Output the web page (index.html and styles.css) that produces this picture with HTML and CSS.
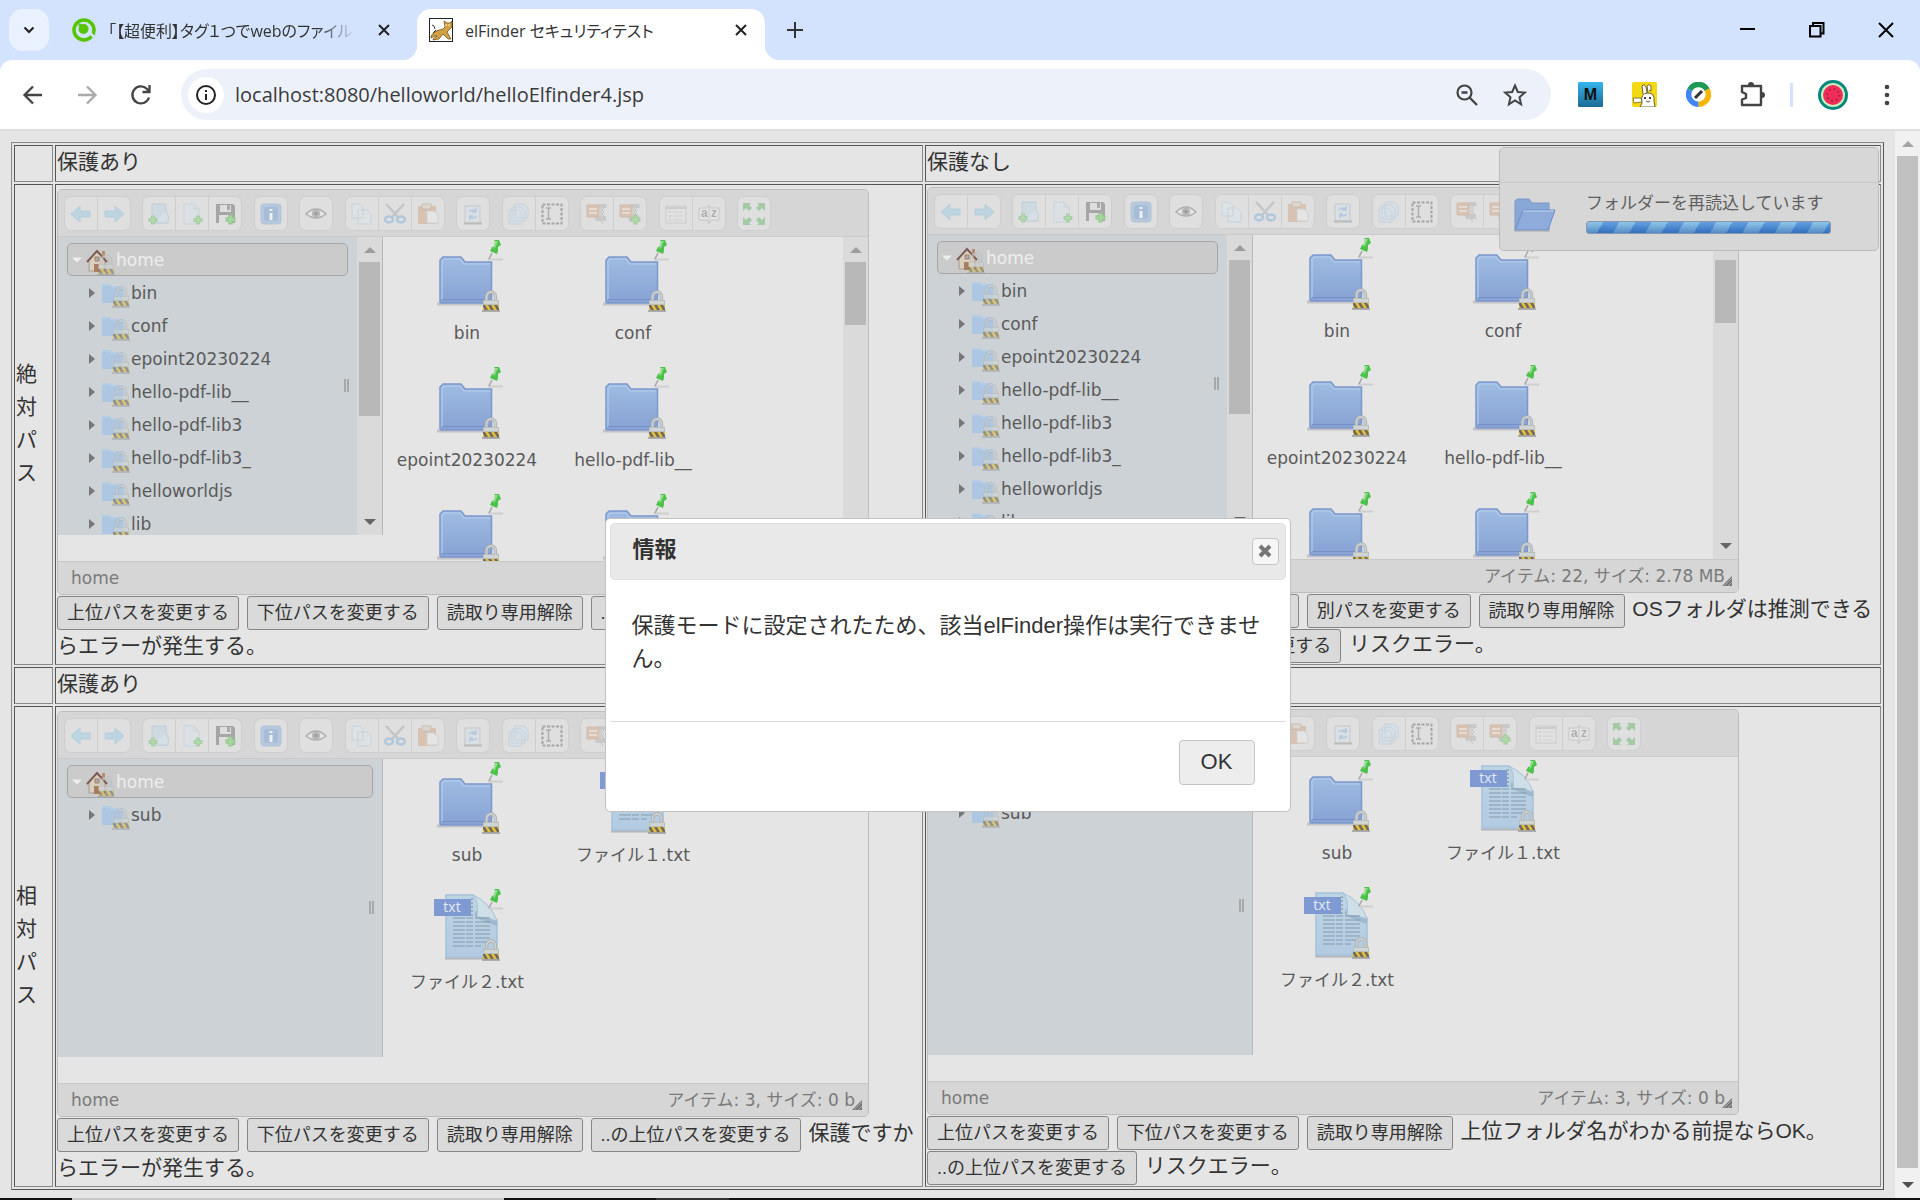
FILE: index.html
```html
<!DOCTYPE html>
<html lang="ja">
<head>
<meta charset="utf-8">
<title>elFinder セキュリティテスト</title>
<link rel="stylesheet" href="styles.css">
</head>
<body>
<svg class="defs" aria-hidden="true">
  <defs>
    <linearGradient id="g-folder" x1="0" y1="0" x2="0" y2="1"><stop offset="0" stop-color="#9fbce2"/><stop offset="1" stop-color="#87a2d4"/></linearGradient>
    <linearGradient id="g-doc" x1="0" y1="0" x2="0" y2="1"><stop offset="0" stop-color="#bdd5e2"/><stop offset="1" stop-color="#b3cbe2"/></linearGradient>
    <linearGradient id="g-m" x1="0" y1="0" x2="0" y2="1"><stop offset="0" stop-color="#35b6ee"/><stop offset="1" stop-color="#1c6a93"/></linearGradient>
    <pattern id="p-hazard" width="6" height="5" patternUnits="userSpaceOnUse"><rect width="6" height="5" fill="#e3bf3c"/><path d="M0 0h3l3 5H3z" fill="#6f6a5c"/></pattern>
  </defs>
  <symbol id="lock" viewBox="0 0 18 22"><path d="M4.500 11V7a4.500 5 0 0 1 9 0v4" fill="none" stroke="#a9acac" stroke-width="3.400"/><path d="M4.500 11V7a4.500 5 0 0 1 9 0v4" fill="none" stroke="#cdd1d1" stroke-width="1.800"/><rect x="1" y="10" width="16" height="11" fill="#b9bdbc"/><rect x="2" y="11" width="14" height="3" fill="#d0d4d3"/><rect x="1" y="15" width="16" height="5" fill="url(#p-hazard)"/><path d="M0 21h18" stroke="#9a9a9a" stroke-width="1.500"/></symbol>
  <symbol id="pin" viewBox="0 0 16 22"><path d="M0 20.500h15" stroke="#cfcfcf" stroke-width="2"/><path d="M4 14l-3 6" stroke="#a5a5a5" stroke-width="1.500"/><path d="M6 1l5-0 2 5-3 2 0 4 -1 3-7-3 2-4 3-1 1-3z" fill="#4dc24a"/><path d="M7 2l3 0-3 7-2 1z" fill="#8fdc8b"/></symbol>
  <symbol id="folder" viewBox="0 0 84 80"><path d="M12 66h54" stroke="#c4c4c8" stroke-width="3"/><path d="M15 64V22l3-3h18l4 5h26.500v40q0 1-1 1H16q-1 0-1-1z" fill="url(#g-folder)" stroke="#7d98cb" stroke-width="1.500"/><path d="M17 62V23l2-2h16l4 5h26" fill="none" stroke="#b4cdeb" stroke-width="1.200"/><path d="M17 61.500h48" stroke="#7590c6"/><use href="#pin" x="63" y="1" width="16" height="22"/><use href="#lock" x="57" y="52" width="18" height="22"/></symbol>
  <symbol id="txt" viewBox="0 0 84 80"><path d="M20 71.500h50" stroke="#b4b4b8" stroke-width="2"/><path d="M21 70V8h27L72 33v37z" fill="url(#g-doc)" stroke="#a5c2da" stroke-width="1.500"/><path d="M50 24l22 10v5q-10-3-22-9z" fill="#8ca9c5" opacity=".6"/><path d="M48 8q6 6 4 22 10 0 20 4Q66 16 48 8z" fill="#cfdfe8" stroke="#a5c2da"/><path d="M28 31h38M28 35h38M28 39h38M28 43h38M28 47h38M28 51h38M28 55h38M28 59h28" stroke="#8399ad" stroke-width="1.200" stroke-dasharray="12 1 7 2 15 1"/><path d="M47 11v17h4" stroke="#9aabba" stroke-width="2" fill="none" stroke-dasharray="2 2"/><rect x="9" y="12" width="37" height="17" fill="#7f9ad2"/><text x="27" y="25" font-family="Open Sans, sans-serif" font-size="14" fill="#e4e9f2" text-anchor="middle">txt</text><use href="#pin" x="63" y="1" width="16" height="22"/><use href="#lock" x="57" y="52" width="18" height="22"/></symbol>
  <symbol id="t-folder" viewBox="0 0 30 28"><path d="M1 20V2h8l2 2h11v17H1z" fill="#adc7e2"/><path d="M1 3h8l2 2h11" stroke="#bed2e8" fill="none"/><use href="#lock" x="11" y="4" width="18" height="22" opacity=".6"/></symbol>
  <symbol id="t-home" viewBox="0 0 30 28"><path d="M3 11v11h16V11l-8-8z" fill="#dacfc0" stroke="#a99a8c"/><path d="M1 13L11 2l10 11" fill="none" stroke="#7c5c56" stroke-width="2"/><path d="M16 2h3v6h-3z" fill="#b98e70"/><path d="M8 15h5v8H8z" fill="#a87e5c"/><path d="M9 8h4v4H9z" fill="#9fb0c0" stroke="#a87e5c"/><use href="#lock" x="11" y="5" width="18" height="22" opacity=".55"/></symbol>
  <symbol id="back" viewBox="0 0 22 22"><path d="M1 11l9-8v5h10v6H10v5z" fill="#8cc8e4" stroke="#7ab4d4"/></symbol>
  <symbol id="fwd" viewBox="0 0 22 22"><path d="M21 11l-9-8v5H2v6h10v5z" fill="#8cc8e4" stroke="#7ab4d4"/></symbol>
  <symbol id="plus" viewBox="0 0 10 10"><path d="M3.500 1h3v2.500H9v3H6.500V9h-3V6.500H1v-3h2.500z" fill="#6fd060" stroke="#55ae48"/></symbol>
  <symbol id="mkdir" viewBox="0 0 22 22"><path d="M4 20V1h14v19z" fill="#b5d3e2" stroke="#8fb4cc"/><path d="M18 8q4 5 2 12H4" fill="#c9dfe9" stroke="#8fb4cc"/><use href="#plus" x="0" y="12" width="10" height="10"/></symbol>
  <symbol id="mkfile" viewBox="0 0 22 22"><path d="M3 21V1h10l5 5v15z" fill="#d5e3ec" stroke="#a9c3d6"/><path d="M13 1v5h5" fill="none" stroke="#a9c3d6"/><use href="#plus" x="12" y="12" width="10" height="10"/></symbol>
  <symbol id="save" viewBox="0 0 22 22"><path d="M2 1h17l2 2v17H2z" fill="#6e6e6e"/><path d="M6 2h11v7H6zM5 12h13v8H5z" fill="#dedede"/><path d="M13 2h3v5h-3z" fill="#777"/><use href="#plus" x="11" y="11" width="11" height="11"/></symbol>
  <symbol id="info" viewBox="0 0 22 22"><rect x="1" y="1" width="20" height="20" rx="3" fill="#8fb2dc" stroke="#8aa8cf"/><rect x="4" y="4" width="14" height="14" rx="2" fill="#6f9bd0"/><path d="M11 6v2M11 10v7" stroke="#fff" stroke-width="3"/></symbol>
  <symbol id="eye" viewBox="0 0 22 22"><path d="M1 11Q11 1 21 11 11 19 1 11z" fill="#eee" stroke="#666" stroke-width="1.500"/><circle cx="11" cy="10.500" r="4" fill="#777"/><circle cx="11" cy="10.500" r="1.500" fill="#333"/></symbol>
  <symbol id="copy" viewBox="0 0 22 22"><path d="M1 15V1h7l4 4v10zM7 21V7h9l4 4v10z" fill="#dbe7ef" stroke="#a6c2d8"/></symbol>
  <symbol id="cut" viewBox="0 0 22 22"><path d="M2 1l12 13M20 1L8 14" stroke="#9a9fa3" stroke-width="2.500"/><ellipse cx="5" cy="16.500" rx="4" ry="3" fill="none" stroke="#68a6d6" stroke-width="2.500"/><ellipse cx="17" cy="16.500" rx="4" ry="3" fill="none" stroke="#68a6d6" stroke-width="2.500"/></symbol>
  <symbol id="paste" viewBox="0 0 22 22"><path d="M1 3h18v18H1z" fill="#cf9a72"/><path d="M5 1h9v5H5z" fill="#d8cdbd" stroke="#a98765"/><path d="M10 8h7l4 4v8H10z" fill="#eee" stroke="#b8b8b8"/></symbol>
  <symbol id="empty" viewBox="0 0 22 22"><path d="M3 20V3h15v17z" fill="#d3e0ec" stroke="#9fa7ae"/><path d="M2 20.500h18" stroke="#888" stroke-width="2"/><path d="M7 9q4-4 7 0M15 13q-4 4-7 0M14 5v4h-4M8 17v-4h3" fill="none" stroke="#7aa4dc" stroke-width="1.500"/></symbol>
  <symbol id="dup" viewBox="0 0 22 22"><path d="M7 15V1h9l4 4v10zM4 18V4h9l4 4v10zM1 21V7h9l4 4v10z" fill="#cfe0ec" stroke="#9fc0d9"/></symbol>
  <symbol id="rename" viewBox="0 0 22 22"><rect x="1.500" y="1.500" width="19" height="19" fill="none" stroke="#505050" stroke-width="2" stroke-dasharray="3 1.500"/><path d="M5 5h5M5 16h5M7.500 5v11" stroke="#666" stroke-width="1.500"/></symbol>
  <symbol id="zip" viewBox="0 0 22 22"><path d="M12 1h8l1 4H12zM8 13h12v5H10z" fill="#aaa"/><path d="M15 5v8M18 5l-2 2 2 2-2 2 2 2M15 18l2 3" stroke="#999" fill="none"/><path d="M1 2h12v12H1z" fill="#cf9a72" stroke="#b88a66"/><path d="M3 5h8v2H3zM3 9h8v2H3z" fill="#ead6c4"/></symbol>
  <symbol id="zipadd" viewBox="0 0 22 22"><use href="#zip" width="22" height="22"/><use href="#plus" x="11" y="11" width="11" height="11"/></symbol>
  <symbol id="view" viewBox="0 0 22 22"><rect x="1" y="3" width="20" height="17" fill="#e4e4e4" stroke="#b0b0b0"/><path d="M1 5h20" stroke="#b0b0b0" stroke-width="2"/><path d="M4 9h2M4 13h2M4 17h2" stroke="#dcb88a" stroke-width="2"/><path d="M8 9h10M8 13h10M8 17h10" stroke="#c0c0c0"/></symbol>
  <symbol id="sort" viewBox="0 0 22 22"><path d="M1 5h8l2-3 2 3h8v12h-8l-2 4-2-4H1z" fill="#eaeaea" stroke="#a6a6a6"/><path d="M11 3v17" stroke="#a6a6a6"/><text x="3" y="14" font-family="Liberation Sans, sans-serif" font-weight="bold" font-size="12" fill="#666">a</text><text x="13" y="14" font-family="Liberation Sans, sans-serif" font-weight="bold" font-size="12" fill="#666">z</text></symbol>
  <symbol id="full" viewBox="0 0 22 22"><path d="M0 0h8L6 2l3 3-3 3-3-3-3 3zM22 0v8l-3-3-3 3-3-3 3-3-2-2zM0 22v-8l3 3 3-3 3 3-3 3 2 2zM22 22h-8l2-2-3-3 3-3 3 3 3-3z" fill="#7dbb80"/></symbol>
  <symbol id="up" viewBox="0 0 12 6"><path d="M6 0l6 6H0z"/></symbol>
  <symbol id="down" viewBox="0 0 12 6"><path d="M0 0h12L6 6z"/></symbol>
  <symbol id="x" viewBox="0 0 16 16"><path d="M3 3l10 10M13 3L3 13" stroke="#222" stroke-width="2" fill="none"/></symbol>
</svg>

<header class="browser">
  <div class="tabs">
    <button class="tab-search" type="button" aria-label="タブを検索"><svg width="16" height="16" viewBox="0 0 16 16"><path d="M3.500 5.500L8 10l4.500-4.500" fill="none" stroke="#1f1f1f" stroke-width="2"/></svg></button>
    <div class="tab">
      <svg width="24" height="24" viewBox="0 0 24 24"><circle cx="12" cy="12" r="10" fill="none" stroke="#55c500" stroke-width="3.500"/><circle cx="11.500" cy="11" r="5" fill="#55c500"/><circle cx="8" cy="7" r="1.500" fill="#55c500"/><path d="M18 15l5 5" stroke="#d3e3fd" stroke-width="2.500"/></svg>
      <span class="tab-title faded">「【超便利】タグ１つでwebのファイル</span>
      <button class="plain" type="button" aria-label="閉じる"><svg width="16" height="16"><use href="#x"/></svg></button>
    </div>
    <div class="tab active">
      <svg width="24" height="24" viewBox="0 0 24 24"><rect x=".5" y=".5" width="23" height="23" fill="#fff" stroke="#222"/><path d="M2 18q3-5 8-6l4-1 2-2-1-6 3 2 3 0 2-2v6l-3 3-2 2 4 7h-3l-5-5-4 5-6 1v-1l4-3-2 0-4 2z" fill="#d2a041" stroke="#60471b" stroke-width=".7"/><path d="M3 7l2 1 1 3M4 15l3-3" fill="none" stroke="#333"/><path d="M16 7h2M19 7h2" stroke="#fff5b8"/></svg>
      <span class="tab-title">elFinder セキュリティテスト</span>
      <button class="plain" type="button" aria-label="閉じる"><svg width="16" height="16"><use href="#x"/></svg></button>
    </div>
    <button class="plain new-tab" type="button" aria-label="新しいタブ"><svg width="16" height="16" viewBox="0 0 16 16"><path d="M8 0v16M0 8h16" stroke="#333" stroke-width="2"/></svg></button>
    <div class="win">
      <button class="plain" type="button" aria-label="最小化"><svg width="16" height="16" viewBox="0 0 16 16"><path d="M0 7h15" stroke="#000" stroke-width="2"/></svg></button>
      <button class="plain" type="button" aria-label="元に戻す"><svg width="16" height="16" viewBox="0 0 16 16"><path d="M1 4h10.500v10.500H1zM4 4V1h10.500v10.500H12" fill="none" stroke="#000" stroke-width="2"/></svg></button>
      <button class="plain" type="button" aria-label="ウィンドウを閉じる"><svg width="16" height="16" viewBox="0 0 16 16"><path d="M1 1l14 14M15 1L1 15" stroke="#000" stroke-width="2"/></svg></button>
    </div>
  </div>
  <div class="nav-bar">
    <div class="nav-btns">
      <button class="plain" type="button" aria-label="戻る"><svg width="24" height="24" viewBox="0 0 24 24"><path d="M21 12H4M12 3.500L3.500 12l8.500 8.500" fill="none" stroke="#444" stroke-width="2.300"/></svg></button>
      <button class="plain" type="button" aria-label="進む"><svg width="24" height="24" viewBox="0 0 24 24"><path d="M3 12h17M12 3.500L20.500 12 12 20.500" fill="none" stroke="#aaa" stroke-width="2.300"/></svg></button>
      <button class="plain" type="button" aria-label="再読み込み"><svg width="24" height="24" viewBox="0 0 24 24"><path d="M20 14.500a8.500 8.500 0 1 1-2-8.500l2.500 2.500M20.500 2v7h-7" fill="none" stroke="#444" stroke-width="2.300"/></svg></button>
    </div>
    <div class="omnibox">
      <span class="site-info"><svg width="22" height="22" viewBox="0 0 22 22"><circle cx="11" cy="11" r="9" fill="none" stroke="#222" stroke-width="2"/><path d="M11 6v2M11 10v6" stroke="#222" stroke-width="2"/></svg></span>
      <input class="url" type="text" aria-label="アドレス" value="localhost:8080/helloworld/helloElfinder4.jsp">
      <svg width="24" height="24" viewBox="0 0 24 24"><circle cx="9.500" cy="9.500" r="7" fill="none" stroke="#444" stroke-width="2.200"/><path d="M6.500 9.500h6M14.500 14.500L22 22" stroke="#444" stroke-width="2.400"/></svg>
      <svg width="24" height="24" viewBox="0 0 24 24"><path d="M12 2.500l2.800 6.500 7 .6-5.300 4.700 1.600 7L12 17.500l-6.100 3.800 1.600-7L2.200 9.600l7-.6z" fill="none" stroke="#444" stroke-width="2"/></svg>
    </div>
    <div class="ext">
      <svg width="25" height="25" viewBox="0 0 25 25"><rect width="25" height="25" rx="1" fill="url(#g-m)"/><text x="12.500" y="18" font-family="Liberation Sans, sans-serif" font-weight="bold" font-size="16" text-anchor="middle" fill="#111">M</text></svg>
      <svg width="25" height="25" viewBox="0 0 25 25"><rect width="25" height="25" rx="2" fill="#f3d912"/><path d="M11 12l-1-8q2-3 4 1l1 6M16 11l-1-7q2-3 4 0v5l-2-1" fill="#fff" stroke="#6d6330"/><path d="M1 16h8l1 4-8 1z" fill="#fff" stroke="#8a7b30"/><path d="M8 25l2-4q-2-10 6-10 7 0 6 8l1 6z" fill="#fff" stroke="#6d6330"/><circle cx="13" cy="16" r="1"/><circle cx="18" cy="16" r="1"/><path d="M14 19q2 2 4 0" fill="none" stroke="#555"/></svg>
      <svg width="25" height="25" viewBox="0 0 25 25"><g fill="none" stroke-width="5.500"><path d="M3.900 7.700A9.700 9.700 0 0 1 21.100 7.700" stroke="#1a9a54"/><path d="M21.100 7.700A9.700 9.700 0 0 1 12.500 22.200" stroke="#f7b500"/><path d="M12.500 22.200A9.700 9.700 0 0 1 3.900 7.700" stroke="#4285f4"/></g><path d="M9 16l7-7" stroke="#333" stroke-width="3"/></svg>
      <svg width="25" height="25" viewBox="0 0 25 25"><path d="M2 4h19v19H2v-5.500l4-1.500v-4L2 10z" fill="none" stroke="#444" stroke-width="2.400" stroke-linejoin="round"/><path d="M8 3a3 3 0 0 1 6 0zM22 10a3 3 0 0 1 0 6z" fill="#444"/></svg>
    </div>
    <div class="profile">
      <svg width="30" height="30" viewBox="0 0 30 30"><circle cx="15" cy="15" r="15" fill="#06877c"/><circle cx="15" cy="15" r="12" fill="#c8efc0"/><circle cx="15" cy="15" r="10" fill="#f02d58"/><circle cx="15" cy="15" r="6" fill="none" stroke="#8c1b3a" stroke-width="1.500" stroke-dasharray="1.500 3.200"/></svg>
      <svg width="12" height="24" viewBox="0 0 12 24"><circle cx="6" cy="4" r="2.300" fill="#444"/><circle cx="6" cy="12" r="2.300" fill="#444"/><circle cx="6" cy="20" r="2.300" fill="#444"/></svg>
    </div>
  </div>
</header>

<div class="viewport">
<main class="page">
<table class="grid">
  <colgroup><col class="c-label"><col class="c-left"><col></colgroup>
  <tr class="head"><td></td><td>保護あり</td><td>保護なし</td></tr>
  <tr>
    <td class="label">絶対パス</td>
    <td>
      <section class="fm">
        <div class="tools">
          <div><button type="button" aria-label="戻る"><svg><use href="#back"/></svg></button><button type="button" aria-label="進む"><svg><use href="#fwd"/></svg></button></div>
          <div><button type="button" aria-label="新規フォルダー"><svg><use href="#mkdir"/></svg></button><button type="button" aria-label="新規ファイル"><svg><use href="#mkfile"/></svg></button><button type="button" aria-label="保存" class="strong"><svg><use href="#save"/></svg></button></div>
          <div><button type="button" aria-label="情報" class="strong"><svg><use href="#info"/></svg></button></div>
          <div><button type="button" aria-label="プレビュー"><svg><use href="#eye"/></svg></button></div>
          <div><button type="button" aria-label="コピー"><svg><use href="#copy"/></svg></button><button type="button" aria-label="切り取り"><svg><use href="#cut"/></svg></button><button type="button" aria-label="貼り付け"><svg><use href="#paste"/></svg></button></div>
          <div><button type="button" aria-label="空にする"><svg><use href="#empty"/></svg></button></div>
          <div><button type="button" aria-label="複製"><svg><use href="#dup"/></svg></button><button type="button" aria-label="名前変更"><svg><use href="#rename"/></svg></button></div>
          <div><button type="button" aria-label="解凍"><svg><use href="#zip"/></svg></button><button type="button" aria-label="圧縮"><svg><use href="#zipadd"/></svg></button></div>
          <div><button type="button" aria-label="表示"><svg><use href="#view"/></svg></button><button type="button" aria-label="並べ替え"><svg><use href="#sort"/></svg></button></div>
          <div><button type="button" aria-label="全画面"><svg class="mid"><use href="#full"/></svg></button></div>
        </div>
        <div class="body">
          <nav class="side">
            <ul class="tree">
              <li class="root"><svg class="fold"><use href="#down"/></svg><svg class="ico"><use href="#t-home"/></svg>home</li>
              <li><i></i><svg class="ico"><use href="#t-folder"/></svg>bin</li>
              <li><i></i><svg class="ico"><use href="#t-folder"/></svg>conf</li>
              <li><i></i><svg class="ico"><use href="#t-folder"/></svg>epoint20230224</li>
              <li><i></i><svg class="ico"><use href="#t-folder"/></svg>hello-pdf-lib__</li>
              <li><i></i><svg class="ico"><use href="#t-folder"/></svg>hello-pdf-lib3</li>
              <li><i></i><svg class="ico"><use href="#t-folder"/></svg>hello-pdf-lib3_</li>
              <li><i></i><svg class="ico"><use href="#t-folder"/></svg>helloworldjs</li>
              <li><i></i><svg class="ico"><use href="#t-folder"/></svg>lib</li>
            </ul>
            <div class="vbar long"><svg><use href="#up"/></svg><b></b><svg class="dn"><use href="#down"/></svg></div>
          </nav>
          <div class="files">
            <figure><svg><use href="#folder"/></svg><figcaption>bin</figcaption></figure>
            <figure><svg><use href="#folder"/></svg><figcaption>conf</figcaption></figure>
            <figure><svg><use href="#folder"/></svg><figcaption>epoint20230224</figcaption></figure>
            <figure><svg><use href="#folder"/></svg><figcaption>hello-pdf-lib__</figcaption></figure>
            <figure><svg><use href="#folder"/></svg><figcaption>hello-pdf-lib3</figcaption></figure>
            <figure><svg><use href="#folder"/></svg><figcaption>hello-pdf-lib3_</figcaption></figure>
          </div>
          <div class="vbar"><svg><use href="#up"/></svg><b></b><svg class="dn"><use href="#down"/></svg></div>
        </div>
        <div class="status"><span>home</span><span>アイテム: 22, サイズ: 2.78 MB</span></div>
      </section>
      <p><button type="button">上位パスを変更する</button> <button type="button">下位パスを変更する</button> <button type="button">読取り専用解除</button> <button type="button">..の上位パスを変更する</button> 保護ですからエラーが発生する。</p>
    </td>
    <td>
      <section class="fm">
        <div class="tools">
          <div><button type="button" aria-label="戻る"><svg><use href="#back"/></svg></button><button type="button" aria-label="進む"><svg><use href="#fwd"/></svg></button></div>
          <div><button type="button" aria-label="新規フォルダー"><svg><use href="#mkdir"/></svg></button><button type="button" aria-label="新規ファイル"><svg><use href="#mkfile"/></svg></button><button type="button" aria-label="保存" class="strong"><svg><use href="#save"/></svg></button></div>
          <div><button type="button" aria-label="情報" class="strong"><svg><use href="#info"/></svg></button></div>
          <div><button type="button" aria-label="プレビュー"><svg><use href="#eye"/></svg></button></div>
          <div><button type="button" aria-label="コピー"><svg><use href="#copy"/></svg></button><button type="button" aria-label="切り取り"><svg><use href="#cut"/></svg></button><button type="button" aria-label="貼り付け"><svg><use href="#paste"/></svg></button></div>
          <div><button type="button" aria-label="空にする"><svg><use href="#empty"/></svg></button></div>
          <div><button type="button" aria-label="複製"><svg><use href="#dup"/></svg></button><button type="button" aria-label="名前変更"><svg><use href="#rename"/></svg></button></div>
          <div><button type="button" aria-label="解凍"><svg><use href="#zip"/></svg></button><button type="button" aria-label="圧縮"><svg><use href="#zipadd"/></svg></button></div>
          <div><button type="button" aria-label="表示"><svg><use href="#view"/></svg></button><button type="button" aria-label="並べ替え"><svg><use href="#sort"/></svg></button></div>
          <div><button type="button" aria-label="全画面"><svg class="mid"><use href="#full"/></svg></button></div>
        </div>
        <div class="body">
          <nav class="side">
            <ul class="tree">
              <li class="root"><svg class="fold"><use href="#down"/></svg><svg class="ico"><use href="#t-home"/></svg>home</li>
              <li><i></i><svg class="ico"><use href="#t-folder"/></svg>bin</li>
              <li><i></i><svg class="ico"><use href="#t-folder"/></svg>conf</li>
              <li><i></i><svg class="ico"><use href="#t-folder"/></svg>epoint20230224</li>
              <li><i></i><svg class="ico"><use href="#t-folder"/></svg>hello-pdf-lib__</li>
              <li><i></i><svg class="ico"><use href="#t-folder"/></svg>hello-pdf-lib3</li>
              <li><i></i><svg class="ico"><use href="#t-folder"/></svg>hello-pdf-lib3_</li>
              <li><i></i><svg class="ico"><use href="#t-folder"/></svg>helloworldjs</li>
              <li><i></i><svg class="ico"><use href="#t-folder"/></svg>lib</li>
            </ul>
            <div class="vbar long"><svg><use href="#up"/></svg><b></b><svg class="dn"><use href="#down"/></svg></div>
          </nav>
          <div class="files">
            <figure><svg><use href="#folder"/></svg><figcaption>bin</figcaption></figure>
            <figure><svg><use href="#folder"/></svg><figcaption>conf</figcaption></figure>
            <figure><svg><use href="#folder"/></svg><figcaption>epoint20230224</figcaption></figure>
            <figure><svg><use href="#folder"/></svg><figcaption>hello-pdf-lib__</figcaption></figure>
            <figure><svg><use href="#folder"/></svg><figcaption>hello-pdf-lib3</figcaption></figure>
            <figure><svg><use href="#folder"/></svg><figcaption>hello-pdf-lib3_</figcaption></figure>
          </div>
          <div class="vbar"><svg><use href="#up"/></svg><b></b><svg class="dn"><use href="#down"/></svg></div>
        </div>
        <div class="status"><span>home</span><span>アイテム: 22, サイズ: 2.78 MB</span></div>
      </section>
      <p><button type="button">上位パスを変更する</button> <button type="button">下位パスを変更する</button> <button type="button">別パスを変更する</button> <button type="button">読取り専用解除</button> OSフォルダは推測できるという前提ならOK。 <button type="button">..の上位パスを変更する</button> リスクエラー。</p>
    </td>
  </tr>
  <tr class="head"><td></td><td>保護あり</td><td>保護なし</td></tr>
  <tr>
    <td class="label">相対パス</td>
    <td>
      <section class="fm">
        <div class="tools">
          <div><button type="button" aria-label="戻る"><svg><use href="#back"/></svg></button><button type="button" aria-label="進む"><svg><use href="#fwd"/></svg></button></div>
          <div><button type="button" aria-label="新規フォルダー"><svg><use href="#mkdir"/></svg></button><button type="button" aria-label="新規ファイル"><svg><use href="#mkfile"/></svg></button><button type="button" aria-label="保存" class="strong"><svg><use href="#save"/></svg></button></div>
          <div><button type="button" aria-label="情報" class="strong"><svg><use href="#info"/></svg></button></div>
          <div><button type="button" aria-label="プレビュー"><svg><use href="#eye"/></svg></button></div>
          <div><button type="button" aria-label="コピー"><svg><use href="#copy"/></svg></button><button type="button" aria-label="切り取り"><svg><use href="#cut"/></svg></button><button type="button" aria-label="貼り付け"><svg><use href="#paste"/></svg></button></div>
          <div><button type="button" aria-label="空にする"><svg><use href="#empty"/></svg></button></div>
          <div><button type="button" aria-label="複製"><svg><use href="#dup"/></svg></button><button type="button" aria-label="名前変更"><svg><use href="#rename"/></svg></button></div>
          <div><button type="button" aria-label="解凍"><svg><use href="#zip"/></svg></button><button type="button" aria-label="圧縮"><svg><use href="#zipadd"/></svg></button></div>
          <div><button type="button" aria-label="表示"><svg><use href="#view"/></svg></button><button type="button" aria-label="並べ替え"><svg><use href="#sort"/></svg></button></div>
          <div><button type="button" aria-label="全画面"><svg class="mid"><use href="#full"/></svg></button></div>
        </div>
        <div class="body">
          <nav class="side">
            <ul class="tree">
              <li class="root"><svg class="fold"><use href="#down"/></svg><svg class="ico"><use href="#t-home"/></svg>home</li>
              <li><i></i><svg class="ico"><use href="#t-folder"/></svg>sub</li>
            </ul>
          </nav>
          <div class="files">
            <figure><svg><use href="#folder"/></svg><figcaption>sub</figcaption></figure>
            <figure><svg><use href="#txt"/></svg><figcaption>ファイル１.txt</figcaption></figure>
            <figure><svg><use href="#txt"/></svg><figcaption>ファイル２.txt</figcaption></figure>
          </div>
        </div>
        <div class="status"><span>home</span><span>アイテム: 3, サイズ: 0 b</span></div>
      </section>
      <p><button type="button">上位パスを変更する</button> <button type="button">下位パスを変更する</button> <button type="button">読取り専用解除</button> <button type="button">..の上位パスを変更する</button> 保護ですからエラーが発生する。</p>
    </td>
    <td>
      <section class="fm">
        <div class="tools">
          <div><button type="button" aria-label="戻る"><svg><use href="#back"/></svg></button><button type="button" aria-label="進む"><svg><use href="#fwd"/></svg></button></div>
          <div><button type="button" aria-label="新規フォルダー"><svg><use href="#mkdir"/></svg></button><button type="button" aria-label="新規ファイル"><svg><use href="#mkfile"/></svg></button><button type="button" aria-label="保存" class="strong"><svg><use href="#save"/></svg></button></div>
          <div><button type="button" aria-label="情報" class="strong"><svg><use href="#info"/></svg></button></div>
          <div><button type="button" aria-label="プレビュー"><svg><use href="#eye"/></svg></button></div>
          <div><button type="button" aria-label="コピー"><svg><use href="#copy"/></svg></button><button type="button" aria-label="切り取り"><svg><use href="#cut"/></svg></button><button type="button" aria-label="貼り付け"><svg><use href="#paste"/></svg></button></div>
          <div><button type="button" aria-label="空にする"><svg><use href="#empty"/></svg></button></div>
          <div><button type="button" aria-label="複製"><svg><use href="#dup"/></svg></button><button type="button" aria-label="名前変更"><svg><use href="#rename"/></svg></button></div>
          <div><button type="button" aria-label="解凍"><svg><use href="#zip"/></svg></button><button type="button" aria-label="圧縮"><svg><use href="#zipadd"/></svg></button></div>
          <div><button type="button" aria-label="表示"><svg><use href="#view"/></svg></button><button type="button" aria-label="並べ替え"><svg><use href="#sort"/></svg></button></div>
          <div><button type="button" aria-label="全画面"><svg class="mid"><use href="#full"/></svg></button></div>
        </div>
        <div class="body">
          <nav class="side">
            <ul class="tree">
              <li class="root"><svg class="fold"><use href="#down"/></svg><svg class="ico"><use href="#t-home"/></svg>home</li>
              <li><i></i><svg class="ico"><use href="#t-folder"/></svg>sub</li>
            </ul>
          </nav>
          <div class="files">
            <figure><svg><use href="#folder"/></svg><figcaption>sub</figcaption></figure>
            <figure><svg><use href="#txt"/></svg><figcaption>ファイル１.txt</figcaption></figure>
            <figure><svg><use href="#txt"/></svg><figcaption>ファイル２.txt</figcaption></figure>
          </div>
        </div>
        <div class="status"><span>home</span><span>アイテム: 3, サイズ: 0 b</span></div>
      </section>
      <p><button type="button">上位パスを変更する</button> <button type="button">下位パスを変更する</button> <button type="button">読取り専用解除</button> 上位フォルダ名がわかる前提ならOK。 <button type="button">..の上位パスを変更する</button> リスクエラー。</p>
    </td>
  </tr>
</table>

<aside class="notify">
  <div class="notify-head"></div>
  <div class="notify-body">
    <svg width="42" height="34" viewBox="0 0 42 34"><path d="M1 32V3l2-2h12l3 4h17v27z" fill="#88a8d8" stroke="#7a98cb"/><path d="M1 32L9 12h32l-7 20z" fill="#8fabdc" stroke="#6f8dc6"/><path d="M9 13h31" stroke="#bfd2ec"/><path d="M0 33h36" stroke="#aaa"/></svg>
    <div><div class="notify-text">フォルダーを再読込しています</div><div class="progress"></div></div>
  </div>
</aside>

<div class="overlay">
  <section class="dialog" role="dialog" aria-labelledby="dlg-title">
    <header><h2 id="dlg-title">情報</h2><button type="button" aria-label="閉じる"><svg width="14" height="14" viewBox="0 0 14 14"><path d="M2 2l10 10M12 2L2 12" stroke="#777" stroke-width="4"/></svg></button></header>
    <p>保護モードに設定されたため、該当elFinder操作は実行できません。</p>
    <footer><button type="button">OK</button></footer>
  </section>
</div>
</main>
<div class="vbar page-bar"><svg><use href="#up"/></svg><b></b><svg class="dn"><use href="#down"/></svg></div>
</div>
<div class="taskbar-edge"></div>
</body>
</html>
```
FILE: styles.css
```css
*, *::before, *::after { box-sizing: border-box; }
body {
  margin: 0;
  min-height: 100vh;
  display: flex;
  flex-direction: column;
  background: #e5e5e5;
  color: #333;
  font: 21px/33px "Liberation Sans", "Noto Sans CJK JP", sans-serif;
}
.defs { position: absolute; width: 0; height: 0; }
button, input { font: inherit; color: inherit; }
.plain { border: 0; background: none; padding: 0; display: flex; }

/* browser frame */
.browser { background: #d3e3fd; font-family: "Open Sans", "Noto Sans CJK JP", sans-serif; }
.tabs { display: flex; height: 60px; padding: 9px 26px 0 9px; }
.tab-search {
  width: 40px; height: 42px; border: 0; border-radius: 14px; padding: 0;
  background: #eaf1fe; display: flex; align-items: center; justify-content: center;
}
.tab {
  flex: 0 1 356px; height: 42px; margin-left: 12px; padding: 0 25px 0 11px;
  display: flex; align-items: center; gap: 12px; min-width: 0;
}
.tab.active {
  position: relative; flex-basis: 348px; height: 51px; margin: 0; padding: 0 16px 9px 12px;
  background: #fff; border-radius: 14px 14px 0 0;
}
.tab.active::before, .tab.active::after {
  content: ""; position: absolute; bottom: 0; width: 14px; height: 14px;
}
.tab.active::before { right: 100%; background: radial-gradient(circle at 0 0, transparent 14px, #fff 14px); }
.tab.active::after { left: 100%; background: radial-gradient(circle at 100% 0, transparent 14px, #fff 14px); }
.tab-title {
  flex: 1; overflow: hidden; white-space: nowrap; color: #333; padding-top: 2px;
  font-size: 16px; font-feature-settings: "palt";
}
.faded { margin-right: 8px; -webkit-mask-image: linear-gradient(90deg, #000 85%, transparent); mask-image: linear-gradient(90deg, #000 85%, transparent); }
.new-tab { margin: 13px 0 0 22px; align-self: flex-start; }
.win { display: flex; gap: 53px; margin: 13px 0 0 auto; align-self: flex-start; }
.nav-bar {
  display: flex; align-items: center; height: 71px; padding: 0 27px 0 21px;
  background: #fff; border-bottom: 2px solid #dedede; border-radius: 12px 12px 0 0;
}
.nav-btns { display: flex; gap: 30px; margin-right: 28px; }
.omnibox {
  flex: 1; display: flex; align-items: center; gap: 24px; height: 51px;
  padding: 0 24px 0 7px; border-radius: 26px; background: #edf2fa;
}
.site-info {
  width: 36px; height: 36px; border-radius: 50%; background: #fff;
  display: flex; align-items: center; justify-content: center;
}
.url { flex: 1; min-width: 0; margin-left: -13px; padding: 0; border: 0; background: none; font-size: 20px; color: #3a3a3a; }
.ext { display: flex; gap: 29px; margin-left: 27px; padding-right: 25px; border-right: 3px solid #d3e3fd; height: 24px; align-items: center; }
.profile { display: flex; align-items: center; gap: 33px; margin-left: 25px; }

/* page */
.viewport { flex: 1; display: flex; }
.page { position: relative; flex: 1; padding: 11px 11px 8px; }
.grid {
  width: 100%; table-layout: fixed; border: 1px solid; border-color: #8a8a8a #555 #555 #8a8a8a;
  border-spacing: 2px;
}
.c-label { width: 39px; }
.c-left { width: 868px; }
.grid td {
  padding: 1px; vertical-align: middle; overflow-wrap: anywhere;
  border: 1px solid; border-color: #555 #8a8a8a #8a8a8a #555;
}
.grid .head td { height: 37px; vertical-align: top; line-height: 30px; }
.grid .label { padding-bottom: 5px; }
.grid p { margin: 0; line-height: 31px; }
.grid p button {
  height: 34px; margin: 1px 2px 0 0; padding: 0 9px; font-size: 18px; line-height: 32px;
  vertical-align: top; border: 1px solid #868686; border-radius: 3px; background: #dadada;
}

/* file manager */
.fm {
  position: relative; max-width: 812px; margin-top: 1px;
  border: 1px solid #bdbdbd; border-radius: 5px; color: #5a5a5a; overflow: hidden;
  font: 17px/22px "DejaVu Sans", "Noto Sans CJK JP", sans-serif;
}
.tools { height: 47px; padding: 6px 97px 0 6px; display: flex; justify-content: space-between; background: #d6d6d6; border-bottom: 1px solid #cacaca; }
.tools div { display: flex; height: 35px; border: 1px solid #cecece; border-radius: 7px; background: #dfdfdf; }
.tools button { width: 32px; padding: 0; border: 0; background: none; display: flex; align-items: center; justify-content: center; }
.tools button + button { width: 33px; border-left: 1px solid #cecece; }
.tools svg { width: 22px; height: 22px; opacity: .4; }
.tools .strong svg { opacity: .5; }
.tools .mid { opacity: .6; }
.body { display: flex; height: 324px; }
.side { display: flex; width: 325px; height: 298px; background: #cdd2d6; border-right: 1px solid #b8b8b8; }
.tree { position: relative; flex: 1; margin: 0; padding: 6px 9px 0; list-style: none; overflow: hidden; }
.tree::after {
  content: ""; position: absolute; right: 8px; top: 142px; width: 5px; height: 13px;
  border: solid #a8a8a8; border-width: 0 2px;
}
.tree li { display: flex; align-items: center; height: 33px; padding-left: 21px; }
.tree .root { padding-left: 4px; border: 1px solid #a6a6a6; border-radius: 5px; background: #cbcbcb; color: #eee; }
.tree .ico { width: 30px; height: 28px; margin-top: 6px; }
.tree .root .ico { margin-left: 4px; }
.tree .fold { width: 10px; height: 6px; fill: #eee; }
.tree i { margin: 0 6px 0 1px; border: solid transparent; border-width: 5px 0 5px 6px; border-left-color: #777; }
.files { flex: 1; display: flex; flex-wrap: wrap; align-content: flex-start; overflow: hidden; padding: 1px 0 0 1px; }
.files figure { width: 166px; height: 127px; margin: 0; text-align: center; }
.files figure svg { display: block; width: 84px; height: 80px; margin: 0 auto 4px; }
.vbar { display: flex; flex-direction: column; align-items: center; width: 25px; background: #dadada; padding: 10px 0; }
.vbar svg { width: 12px; height: 6px; fill: #9d9d9d; }
.vbar .dn { margin-top: auto; fill: #666; }
.vbar b { width: 21px; height: 63px; margin-top: 9px; background: #b8b8b8; }
.vbar.long b { height: 154px; }
.status {
  position: relative; display: flex; justify-content: space-between; height: 33px; padding: 5px 13px 0;
  border-top: 1px solid #c8c8c8; background: #d6d6d6; color: #7a7a7a;
}
.status::after {
  content: ""; position: absolute; right: 6px; bottom: 6px; width: 10px; height: 10px;
  background: repeating-linear-gradient(135deg, #777 0 2px, #aaa 2px 3px);
  clip-path: polygon(100% 0, 100% 100%, 0 100%);
}
.page-bar { background: #f1f1f1; }
.page-bar svg { fill: #a3a3a3; }
.page-bar .dn { fill: #505050; }
.page-bar b { flex: 1; background: #c1c1c1; margin-bottom: 14px; }

/* progress notice */
.notify {
  position: absolute; top: 16px; right: 16px; width: 380px; height: 104px;
  border: 1px solid #bcbcbc; border-radius: 5px; background: #d7d7d7; color: #5f5f5f;
}
.notify-head { height: 35px; border-bottom: 1px solid #c8c8c8; }
.notify-body { display: flex; gap: 30px; padding: 7px 0 0 14px; }
.notify-body svg { margin-top: 8px; }
.notify-text { font: 17px/24px "Noto Sans CJK JP", sans-serif; margin-bottom: 7px; }
.progress {
  width: 245px; height: 13px; border: 1px solid #8796ac; border-radius: 3px;
  background: linear-gradient(rgba(255,255,255,.15), rgba(10,50,140,.35)), repeating-linear-gradient(120deg, #7cbce6 0 14px, #4a90da 14px 28px);
}

/* dialog */
.overlay { position: absolute; inset: 0; display: flex; align-items: center; justify-content: center; }
.dialog { width: 686px; padding: 4px; border: 1px solid #c2c2c2; border-radius: 5px; background: #fff; font-size: 22px; }
.dialog header {
  display: flex; align-items: center; justify-content: space-between; height: 57px; padding: 0 6px 0 22px;
  border: 1px solid #ddd; border-radius: 5px; background: #e9e9e9;
}
.dialog h2 { margin: 0; padding-bottom: 4px; font-size: 22px; }
.dialog header button {
  width: 27px; height: 27px; padding: 0; border: 1px solid #c5c5c5; border-radius: 4px; background: #f6f6f6;
  display: flex; align-items: center; justify-content: center;
}
.dialog p { margin: 0; padding: 29px 22px 46px; }
.dialog footer { padding: 18px 31px 22px; border-top: 1px solid #ddd; text-align: right; }
.dialog footer button { width: 76px; height: 45px; padding: 0 0 2px; border: 1px solid #c5c5c5; border-radius: 4px; background: #ededed; }
.taskbar-edge { height: 2px; background: linear-gradient(90deg, #111 72px, #c8c8c8 72px 504px, #111 504px 656px, #333 656px 729px, #111 729px); }
```
